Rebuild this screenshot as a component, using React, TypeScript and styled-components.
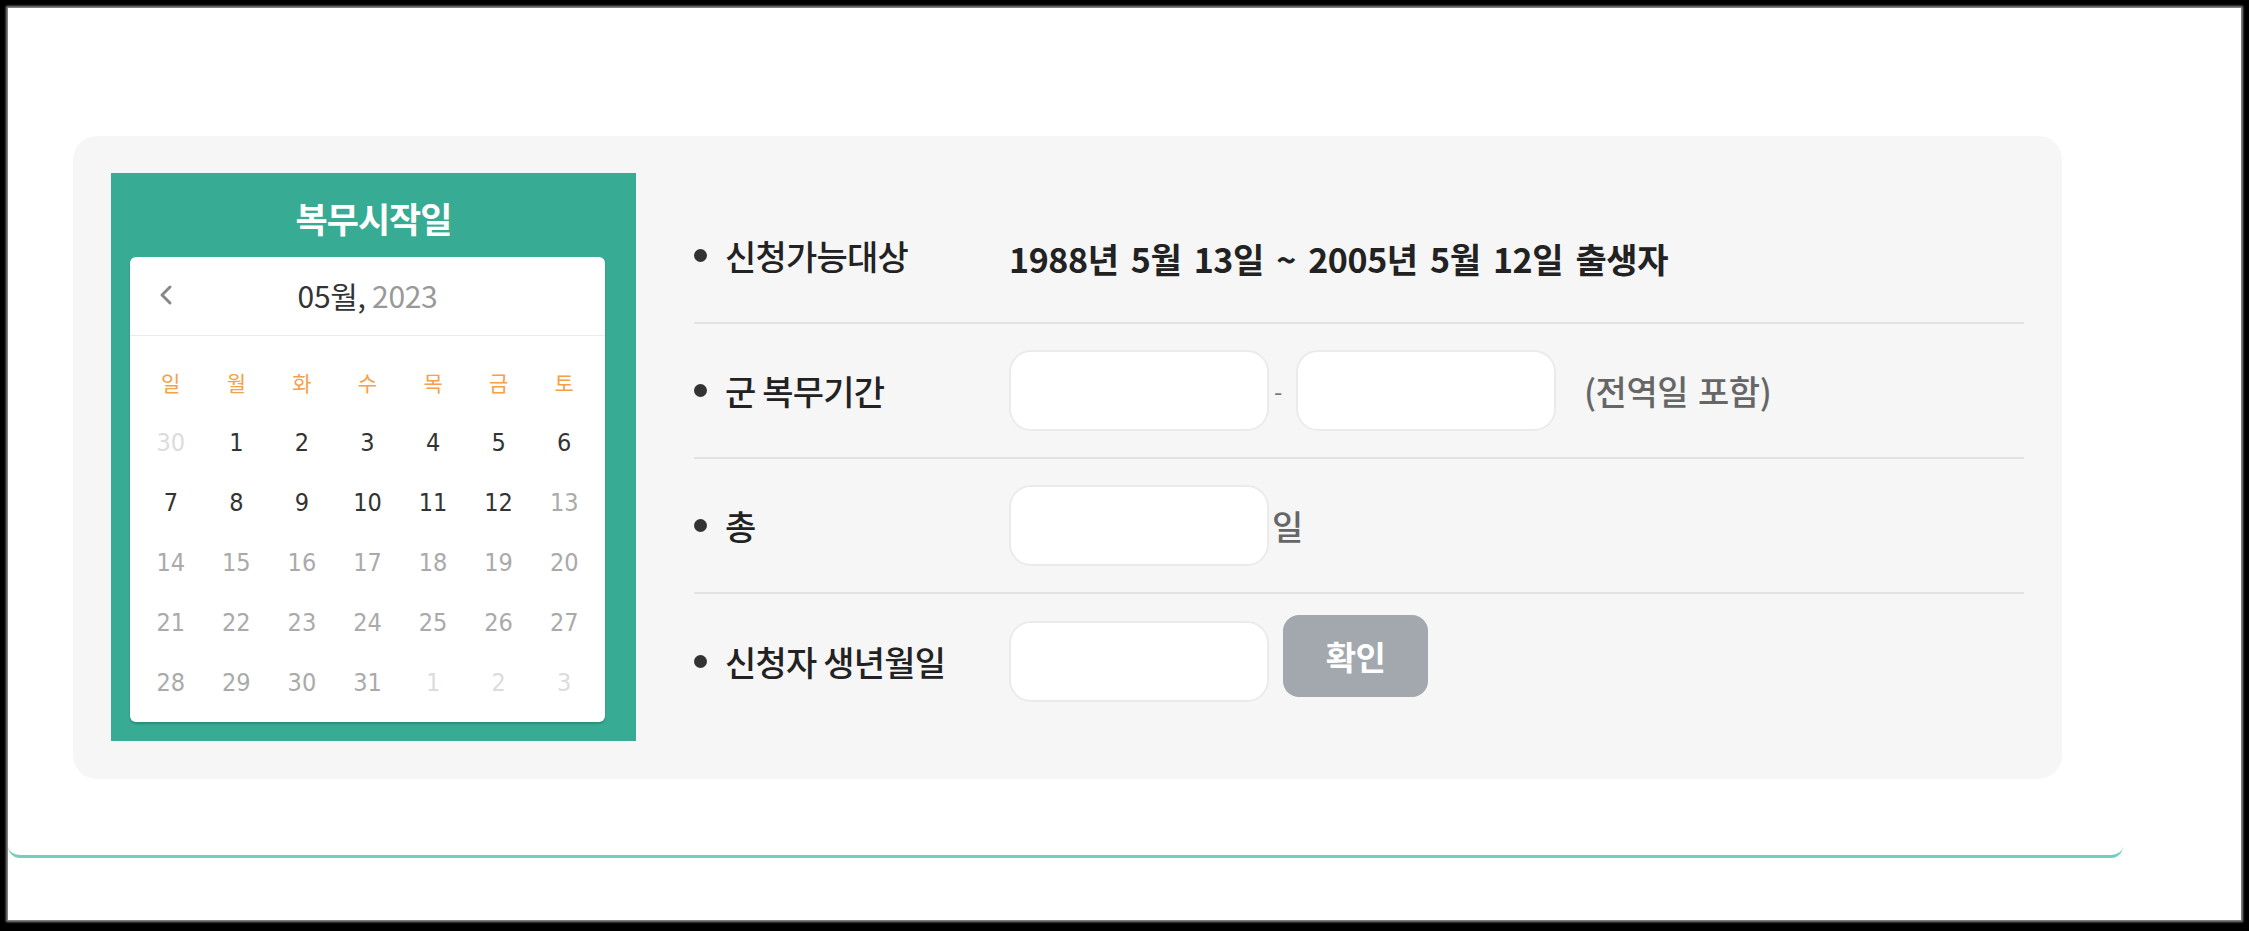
import React from "react";
import styled, { createGlobalStyle } from "styled-components";

const Global = createGlobalStyle`
  html, body { margin: 0; padding: 0; background: #000; }
  body { font-family: "Noto Sans CJK KR", "Noto Sans", sans-serif; }
  * { box-sizing: border-box; }
`;

const Frame = styled.div`
  margin: 8px 8px 11px 8px;
  height: 912px;
  background: #fff;
  box-shadow: 0 0 2px 2px #8a8a8a;
`;

const Wrapper = styled.div`
  width: 2115px;
  padding: 128px 61px 76px 65px;
  border-bottom: 3px solid #6fd1bb;
  border-radius: 0 0 12px 12px;
`;

const Panel = styled.div`
  display: flex;
  align-items: center;
  gap: 58px;
  background: #f6f6f6;
  border-radius: 24px;
  padding: 37px 38px 38px 38px;
`;

const CalendarCard = styled.div`
  flex: 0 0 525px;
  background: #38ab94;
  padding: 0 31px 19px 19px;
`;

const CardTitle = styled.div`
  height: 84px;
  line-height: 90px;
  margin-right: -12px;
  text-align: center;
  color: #fff;
  font-size: 35px;
  font-weight: 700;
  letter-spacing: -1px;
`;

const CalBox = styled.div`
  background: #fff;
  border-radius: 6px;
  box-shadow: 0 2px 2px rgba(0, 0, 0, 0.18);
  height: 465px;
`;

const CalHeader = styled.div`
  height: 79px;
  border-bottom: 1px solid #ececec;
  display: grid;
  grid-template-columns: 1fr auto 1fr;
  align-items: center;
  padding-bottom: 2px;
`;

const PrevBtn = styled.div`
  padding-left: 28px;
  display: flex;
  align-items: center;
`;

const MonthLabel = styled.div`
  font-size: 30px;
  color: #333;
  letter-spacing: -0.3px;
`;

const YearPart = styled.span`
  color: #999;
`;

const DayGrid = styled.div`
  display: grid;
  grid-template-columns: repeat(7, 1fr);
  grid-auto-rows: 60px;
  padding: 16px 8px 10px 8px;
`;

const WeekDay = styled.div`
  display: flex;
  align-items: center;
  justify-content: center;
  color: #f5a04a;
  font-size: 21px;
`;

const Day = styled.div<{ $tone: "dark" | "grey" | "light" }>`
  display: flex;
  align-items: center;
  justify-content: center;
  font-family: "DejaVu Sans Condensed", "Noto Sans", sans-serif;
  font-size: 25px;
  color: ${(p) => (p.$tone === "dark" ? "#333" : p.$tone === "grey" ? "#aaa" : "#dcdcdc")};
`;

const Form = styled.div`
  flex: 1;
  display: flex;
  flex-direction: column;
  padding-top: 4px;
`;

const Row = styled.div<{ $last?: boolean }>`
  height: 135px;
  display: flex;
  align-items: center;
  border-bottom: ${(p) => (p.$last ? "none" : "2px solid #e2e2e2")};
`;

const Label = styled.div`
  flex: 0 0 315px;
  display: flex;
  align-items: center;
  gap: 18px;
  font-size: 34px;
  font-weight: 500;
  color: #222;
  letter-spacing: -0.8px;
  &::before {
    content: "";
    width: 13px;
    height: 13px;
    border-radius: 50%;
    background: #333;
    flex: 0 0 13px;
  }
`;

const Value = styled.div`
  font-size: 34px;
  font-weight: 700;
  color: #222;
  letter-spacing: -0.4px;
  word-spacing: 5px;
  padding-top: 6px;
`;

const Field = styled.div`
  display: flex;
  align-items: center;
`;

const Input = styled.input`
  width: 260px;
  height: 81px;
  border: 2px solid #ebebeb;
  border-radius: 22px;
  background: #fff;
  outline: none;
`;

const Sep = styled.span`
  width: 27px;
  padding-left: 5px;
  font-size: 24px;
  color: #777;
`;

const Note = styled.span<{ $gap: number }>`
  margin-left: ${(p) => p.$gap}px;
  font-size: 34px;
  font-weight: 500;
  color: #666;
  letter-spacing: -0.5px;
  word-spacing: 3px;
`;

const ConfirmBtn = styled.button`
  margin-left: 14px;
  margin-bottom: 11px;
  width: 145px;
  height: 82px;
  border: none;
  border-radius: 16px;
  background: #a3a8ae;
  color: #fff;
  font-family: "Noto Sans CJK KR", sans-serif;
  font-size: 33px;
  font-weight: 700;
  letter-spacing: -0.5px;
`;

type Tone = "dark" | "grey" | "light";

const weekDays = ["일", "월", "화", "수", "목", "금", "토"];

const buildDays = (): { n: number; tone: Tone }[] => {
  const out: { n: number; tone: Tone }[] = [{ n: 30, tone: "light" }];
  for (let i = 1; i <= 31; i++) out.push({ n: i, tone: i <= 12 ? "dark" : "grey" });
  for (let i = 1; i <= 3; i++) out.push({ n: i, tone: "light" });
  return out;
};

export default function App() {
  const days = buildDays();
  return (
    <>
      <Global />
      <Frame>
        <Wrapper>
          <Panel>
            <CalendarCard>
              <CardTitle>복무시작일</CardTitle>
              <CalBox>
                <CalHeader>
                  <PrevBtn>
                    <svg width="16" height="22" viewBox="0 0 16 22">
                      <polyline
                        points="12,3 4,11 12,19"
                        fill="none"
                        stroke="#888"
                        strokeWidth="3"
                        strokeLinecap="round"
                        strokeLinejoin="round"
                      />
                    </svg>
                  </PrevBtn>
                  <MonthLabel>
                    05월, <YearPart>2023</YearPart>
                  </MonthLabel>
                  <div />
                </CalHeader>
                <DayGrid>
                  {weekDays.map((w) => (
                    <WeekDay key={w}>{w}</WeekDay>
                  ))}
                  {days.map((d, i) => (
                    <Day key={i} $tone={d.tone}>
                      {d.n}
                    </Day>
                  ))}
                </DayGrid>
              </CalBox>
            </CalendarCard>
            <Form>
              <Row>
                <Label>신청가능대상</Label>
                <Value>1988년 5월 13일 ~ 2005년 5월 12일 출생자</Value>
              </Row>
              <Row>
                <Label>군 복무기간</Label>
                <Field>
                  <Input />
                  <Sep>-</Sep>
                  <Input />
                  <Note $gap={28}>(전역일 포함)</Note>
                </Field>
              </Row>
              <Row>
                <Label>총</Label>
                <Field>
                  <Input />
                  <Note $gap={3}>일</Note>
                </Field>
              </Row>
              <Row $last>
                <Label>신청자 생년월일</Label>
                <Field>
                  <Input />
                  <ConfirmBtn>확인</ConfirmBtn>
                </Field>
              </Row>
            </Form>
          </Panel>
        </Wrapper>
      </Frame>
    </>
  );
}
